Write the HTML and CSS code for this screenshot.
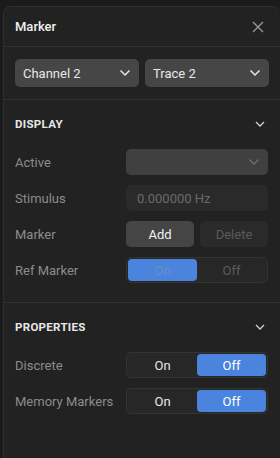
FILE: index.html
```html
<!DOCTYPE html>
<html lang="en">
<head>
    <meta charset="UTF-8">
    <meta name="viewport" content="width=device-width, initial-scale=1.0">
    <title>Marker</title>
    <link rel="stylesheet" href="styles.css">
</head>
<body>

<div class="panel">
    <div class="panel-header">
        <span class="panel-title">Marker</span>
        <svg class="close" width="12" height="12" viewBox="0 0 12 12">
            <path d="M1 1 L11 11 M11 1 L1 11" stroke="#9a9a9a" stroke-width="1.3" fill="none"/>
        </svg>
    </div>

    <div class="selects">
        <div class="select">
            <span>Channel 2</span>
            <svg class="chev" width="12" height="8" viewBox="0 0 12 8"><path d="M1.5 1.5 L6 6 L10.5 1.5" stroke="#e6e6e6" stroke-width="1.5" fill="none"/></svg>
        </div>
        <div class="select">
            <span>Trace 2</span>
            <svg class="chev" width="12" height="8" viewBox="0 0 12 8"><path d="M1.5 1.5 L6 6 L10.5 1.5" stroke="#e6e6e6" stroke-width="1.5" fill="none"/></svg>
        </div>
    </div>

    <div class="section">
        <div class="section-header">
            <span>Display</span>
            <svg width="10" height="6" viewBox="0 0 10 6"><path d="M1 1 L5 5 L9 1" stroke="#d0d0d0" stroke-width="1.3" fill="none"/></svg>
        </div>
        <div class="row">
            <span class="label">Active</span>
            <div class="select small disabled">
                <span></span>
                <svg class="chev" width="12" height="8" viewBox="0 0 12 8"><path d="M1.5 1.5 L6 6 L10.5 1.5" stroke="#6e6e6e" stroke-width="1.3" fill="none"/></svg>
            </div>
        </div>
        <div class="row">
            <span class="label">Stimulus</span>
            <div class="input">0.000000 Hz</div>
        </div>
        <div class="row">
            <span class="label">Marker</span>
            <div class="buttons">
                <div class="btn">Add</div>
                <div class="btn off">Delete</div>
            </div>
        </div>
        <div class="row">
            <span class="label">Ref Marker</span>
            <div class="toggle dim">
                <div class="opt active">On</div>
                <div class="opt">Off</div>
            </div>
        </div>
    </div>

    <div class="section">
        <div class="section-header">
            <span>Properties</span>
            <svg width="10" height="6" viewBox="0 0 10 6"><path d="M1 1 L5 5 L9 1" stroke="#d0d0d0" stroke-width="1.3" fill="none"/></svg>
        </div>
        <div class="row">
            <span class="label">Discrete</span>
            <div class="toggle">
                <div class="opt">On</div>
                <div class="opt active">Off</div>
            </div>
        </div>
        <div class="row">
            <span class="label">Memory Markers</span>
            <div class="toggle">
                <div class="opt">On</div>
                <div class="opt active">Off</div>
            </div>
        </div>
    </div>
</div>

</body>
</html>
```

FILE: styles.css
```css
body {
    margin: 0;
    padding: 6px 0 0 3px;
    background-color: #1b1b1b;
    font-family: Roboto, "Liberation Sans", sans-serif;
    font-size: 13px;
    color: #e6e6e6;
    height: 458px;
    box-sizing: border-box;
    overflow: hidden;
}
.panel {
    background-color: #222222;
    border: 1px solid #2e2e2e;
    border-right: none;
    border-bottom: none;
    border-radius: 8px 8px 0 0;
    height: 100%;
    box-sizing: border-box;
}
.panel-header {
    height: 39px;
    display: flex;
    align-items: center;
    justify-content: space-between;
    padding: 0 12px 0 11px;
    border-bottom: 1px solid #333333;
}
.panel-title {
    font-size: 13px;
    font-weight: 500;
    color: #f0f0f0;
}
.close {
    margin-right: 4px;
}
.selects {
    display: flex;
    gap: 6px;
    padding: 12px 11px 12px 11px;
    border-bottom: 1px solid #333333;
}
.select {
    flex: 1;
    height: 28px;
    background-color: #464646;
    border-radius: 5px;
    display: flex;
    align-items: center;
    justify-content: space-between;
    padding: 0 8px 0 8px;
    font-size: 13px;
    color: #e8e8e8;
}
.select.small {
    height: 26px;
}
.select.disabled {
    background-color: #404040;
}
.section {
    padding: 12px 12px 19px 11px;
    border-bottom: 1px solid #333333;
}
.section:last-child {
    border-bottom: none;
}
.section-header {
    height: 24px;
    display: flex;
    align-items: center;
    justify-content: space-between;
    padding-right: 3px;
    margin-bottom: 13px;
}
.section-header span {
    text-transform: uppercase;
    font-weight: 700;
    font-size: 11.5px;
    letter-spacing: 0.3px;
    color: #e8e8e8;
}
.row {
    display: grid;
    grid-template-columns: 1fr 142px;
    align-items: center;
    height: 26px;
    margin-bottom: 10px;
}
.row:last-child {
    margin-bottom: 0;
}
.label {
    color: #8c8c8c;
    font-size: 13px;
}
.input {
    height: 26px;
    background-color: #2a2a2a;
    border-radius: 5px;
    display: flex;
    align-items: center;
    padding: 0 11px;
    color: #6b6b6b;
    font-size: 13px;
}
.buttons {
    display: flex;
    gap: 6px;
}
.btn {
    flex: 1;
    height: 26px;
    border-radius: 5px;
    background-color: #454545;
    display: flex;
    align-items: center;
    justify-content: center;
    color: #f0f0f0;
    font-size: 13px;
}
.btn.off {
    background-color: #2a2a2a;
    color: #5a5a5a;
}
.toggle {
    height: 26px;
    display: flex;
    border: 1px solid #333333;
    background-color: #272727;
    border-radius: 5px;
    box-sizing: border-box;
    padding: 1px;
}
.opt {
    flex: 1;
    display: flex;
    align-items: center;
    justify-content: center;
    border-radius: 4px;
    color: #e8e8e8;
}
.opt.active {
    background-color: #4a84dc;
    color: #ffffff;
}
.toggle.dim .opt {
    color: #5c5c5c;
}
.toggle.dim .opt.active {
    color: #6b8fc6;
}
```
